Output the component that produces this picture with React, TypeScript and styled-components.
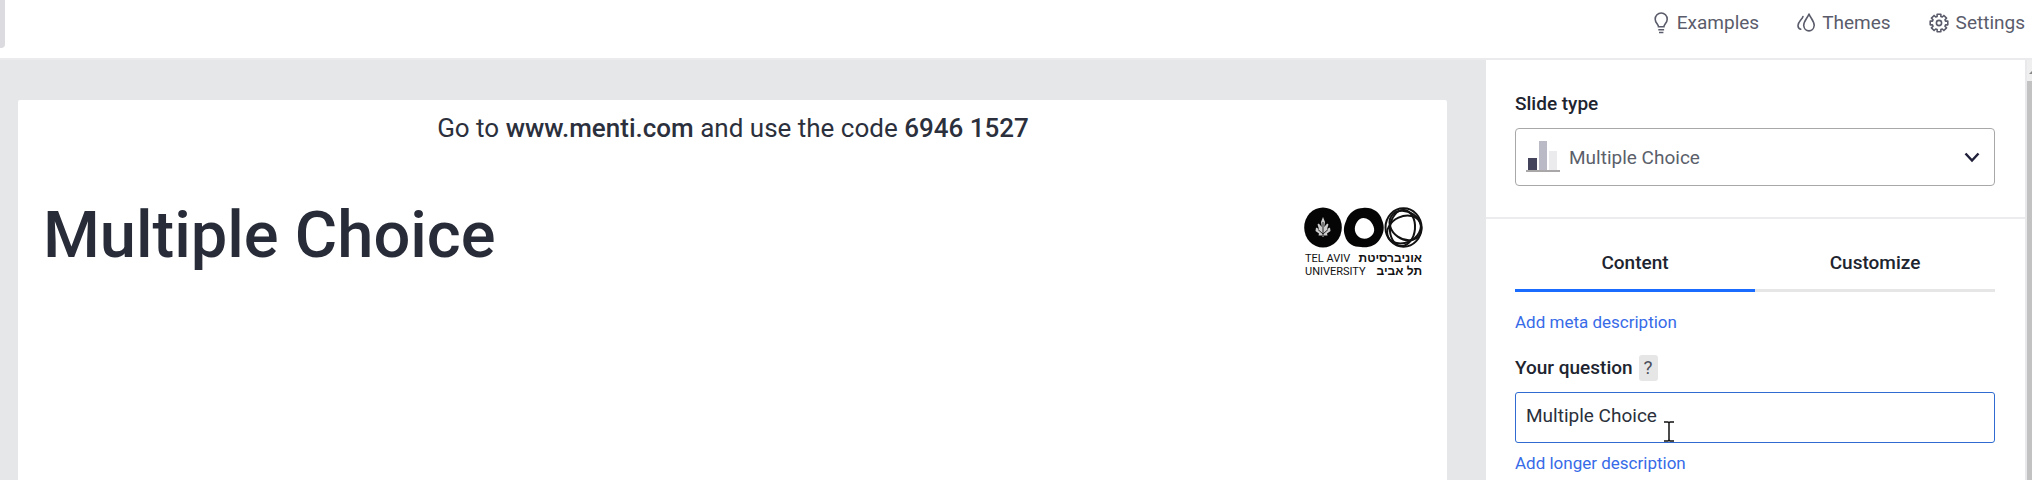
import React, { useState } from "react";
import styled, { createGlobalStyle } from "styled-components";

const GlobalStyle = createGlobalStyle`
  *, *::before, *::after { box-sizing: border-box; }
  body { margin: 0; background: #fff; }
  body, button, input, select { font-family: Roboto, "Liberation Sans", sans-serif; }
`;

const Page = styled.div`
  display: flex;
  flex-direction: column;
  height: 100vh;
  overflow: hidden;
  color: #20242f;
`;

const Header = styled.header`
  display: flex;
  flex: none;
  justify-content: space-between;
  height: 60px;
  border-bottom: 2px solid #ebebed;
  background: #fff;
`;

const HeaderHandle = styled.div`
  width: 5px;
  height: 48px;
  border-radius: 0 0 4px 0;
  background: #dcdbdf;
`;

const Nav = styled.nav`
  display: flex;
  align-items: flex-start;
  gap: 38px;
  padding: 11px 7px 0 0;
`;

const NavButton = styled.button`
  display: flex;
  align-items: center;
  gap: 7px;
  padding: 0;
  border: 0;
  background: none;
  color: #5a5c6b;
  font-size: 19px;
  line-height: 24px;
  cursor: pointer;
  svg { flex: none; }
`;

const Main = styled.main`
  display: flex;
  flex: 1;
  min-height: 0;
`;

const Stage = styled.section`
  display: flex;
  flex: 1;
  min-width: 0;
  padding: 40px 39px 0 18px;
  background: #e5e7e9;
`;

const Slide = styled.article`
  flex: 1;
  padding: 12px 24px 0 25px;
  border-radius: 2px 2px 0 0;
  background: #fff;
`;

const JoinLine = styled.p`
  margin: 0;
  color: #2b303c;
  font-size: 26px;
  line-height: 32px;
  text-align: center;
  strong { font-weight: 500; }
`;

const SlideHead = styled.div`
  display: flex;
  align-items: flex-start;
  justify-content: space-between;
  margin-top: 50px;
`;

const Title = styled.h1`
  margin: 0;
  color: #282c38;
  font-size: 65px;
  font-weight: 500;
  line-height: 82px;
`;

const Logo = styled.div`
  width: 119px;
  padding-top: 13px;
  color: #111;
  svg { display: block; }
`;

const LogoText = styled.div`
  padding: 4px 1px 0;
`;

const LogoLine = styled.div`
  display: flex;
  justify-content: space-between;
  font-size: 11px;
  line-height: 13px;
  white-space: nowrap;
  b { font-family: "Liberation Sans", "DejaVu Sans", sans-serif; font-size: 12px; }
`;

const Sidebar = styled.aside`
  display: flex;
  flex: none;
  width: 546px;
`;

const Panel = styled.div`
  flex: 1;
  overflow: hidden;
  background: #fff;
`;

const Group = styled.div<{ $divided?: boolean }>`
  padding: ${(p) => (p.$divided ? "32px 30px 31px 29px" : "31px 30px 0 29px")};
  border-bottom: ${(p) => (p.$divided ? "2px solid #ececee" : "0")};
`;

const Label = styled.label`
  display: block;
  font-size: 19px;
  font-weight: 500;
  line-height: 24px;
`;

const SelectBox = styled.div`
  display: grid;
  align-items: center;
  height: 58px;
  margin-top: 12px;
  > * { grid-area: 1 / 1; }
  > svg { z-index: 1; pointer-events: none; }
  > svg:first-child { margin-left: 11px; }
  > svg:last-child { justify-self: end; margin-right: 14px; }
`;

const Select = styled.select`
  width: 100%;
  height: 100%;
  padding: 0 48px 0 53px;
  border: 1px solid #a8a8a8;
  border-radius: 4px;
  appearance: none;
  background: #fff;
  color: #5b5f6b;
  font-size: 19px;
  cursor: pointer;
`;

const Tabs = styled.div`
  display: flex;
`;

const Tab = styled.button<{ $active: boolean }>`
  flex: 1;
  height: 42px;
  padding: 0 0 13px;
  border: 0;
  border-bottom: 3px solid ${(p) => (p.$active ? "#196cff" : "#e6e6e6")};
  background: none;
  color: #20242f;
  font-size: 19px;
  font-weight: 500;
  line-height: 24px;
  cursor: pointer;
`;

const TextLink = styled.a`
  display: block;
  width: max-content;
  color: #376be8;
  font-size: 17px;
  line-height: 24px;
  text-decoration: none;
`;

const Field = styled.div`
  display: flex;
  flex-direction: column;
  gap: 11px;
  padding: 21px 0 8px;
`;

const MetaRow = styled.div`
  padding-top: 18px;
`;

const LabelRow = styled.div`
  display: flex;
  align-items: center;
  gap: 6px;
  height: 26px;
`;

const HelpButton = styled.button`
  width: 19px;
  height: 26px;
  padding: 0;
  border: 0;
  border-radius: 3px;
  background: #e6e6e7;
  color: #4c505b;
  font-size: 19px;
  line-height: 24px;
`;

const InputWrap = styled.div`
  position: relative;
`;

const TextInput = styled.input`
  display: block;
  width: 100%;
  height: 51px;
  padding: 0 10px 4px;
  border: 1px solid #2f6bd0;
  border-radius: 3px;
  outline: 0;
  background: #fff;
  color: #2b303b;
  font-size: 19px;
`;

const Pointer = styled.svg`
  position: absolute;
  top: 29px;
  left: 149px;
  pointer-events: none;
`;

const ScrollTrack = styled.div`
  flex: none;
  width: 7px;
  border-left: 2px solid #e9e9eb;
  background: #efefef;
  svg { display: block; }
`;

const ScrollThumb = styled.div`
  height: 100%;
  background: #c2c2c2;
`;

const BulbIcon = () => (
  <svg width="16" height="22" viewBox="0 0 16 22" fill="none" stroke="currentColor" strokeWidth="1.6">
    <path d="M4.500 14.800c0-2.600-3.300-3.800-3.300-7.600a6 6.200 0 0 1 12 0c0 3.800-3.300 5-3.300 7.600zM4.300 17.700h5.800M5 20.500h4.400" />
  </svg>
);

const DropsIcon = () => (
  <svg width="18" height="22" viewBox="0 0 18 22" fill="none" stroke="currentColor" strokeWidth="1.6" strokeLinecap="round" strokeLinejoin="round">
    <path d="M12 2c1.500 4 5.200 7 5.200 11.500a5.300 6.200 0 0 1-10.500 0C6.700 9 10.500 6 12 2z" />
    <path d="M6 4.500C5 7.500 1 10 1 13.500c0 2 1 3.300 2.700 3.800" />
  </svg>
);

const GearIcon = () => {
  const teeth = Array.from({ length: 8 }, (_, i) => {
    const at = (deg: number, r: number) => {
      const a = ((i * 45 + deg) * Math.PI) / 180;
      return `${(10 + r * Math.sin(a)).toFixed(2)} ${(11 - r * Math.cos(a)).toFixed(2)}`;
    };
    return `${at(-12, 9)} L${at(12, 9)} L${at(16, 6.8)} L${at(29, 6.8)}`;
  });
  return (
    <svg width="20" height="22" viewBox="0 0 20 22" fill="none" stroke="currentColor" strokeWidth="1.6" strokeLinejoin="round">
      <path d={`M${teeth.join(" L")}Z`} />
      <circle cx="10" cy="11" r="2.600" />
    </svg>
  );
};

const BarsIcon = () => (
  <svg width="34" height="32" viewBox="0 0 34 32">
    <path fill="#43435b" d="M2 17h9v12H2z" />
    <path fill="#b9bac6" d="M13 0h8v29h-8z" />
    <path fill="#ebebed" d="M23 10h8v19h-8z" />
    <path fill="#aaa7a8" d="M0 29h34v2H0z" />
  </svg>
);

const ChevronIcon = () => (
  <svg width="18" height="14" viewBox="0 0 18 14" fill="none" stroke="#20203a" strokeWidth="2.500">
    <path d="M2.500 3.500l6.500 7 6.500-7" />
  </svg>
);

const LogoMark = () => (
  <svg width="119" height="41" viewBox="0 0 119 41">
    <ellipse cx="19" cy="20.500" rx="18.800" ry="20" fill="#050505" />
    <path fill="#ccc" d="M19 10l2 5-.8 5 3-3.500 1.300 1-1.500 4.500 3-1.500 .5 3.500-3.500 2.500 .5 2h-4v1.500h-1v-1.500h-4l.5-2-3.500-2.500 .5-3.500 3 1.500-1.500-4.500 1.300-1 3 3.500-.8-5z" />
    <path stroke="#222" d="M19 15v14M14 22.500l5 4.500 5-4.500" fill="none" />
    <path fill="#050505" fillRule="evenodd" d="M42 14C45 5 52 1 59 1c9-1 17 4 19 12 3 7 2 13-2 19-4 7-12 9-19 8-7 0-14-3-16-11-2-6-1-10 1-15zM53 15c-4 6-2 12 2 15 4 3 11 2 14-3 3-4 0-11-4-14-4-3-9-3-12 2z" />
    <g fill="none" stroke="#111" strokeWidth="2">
      <ellipse cx="99.500" cy="20.500" rx="18" ry="19.300" />
      <ellipse cx="101.500" cy="18.500" rx="17" ry="13.500" transform="rotate(35 101.500 18.500)" />
      <ellipse cx="98.500" cy="21" rx="18" ry="12.500" transform="rotate(95 98.500 21)" />
      <ellipse cx="100" cy="22.500" rx="17.500" ry="13" transform="rotate(155 100 22.500)" />
    </g>
  </svg>
);

export default function App() {
  const [tab, setTab] = useState("Content");
  const [question, setQuestion] = useState("Multiple Choice");

  return (
    <Page>
      <GlobalStyle />
      <Header>
        <HeaderHandle />
        <Nav>
          <NavButton><BulbIcon />Examples</NavButton>
          <NavButton><DropsIcon />Themes</NavButton>
          <NavButton><GearIcon />Settings</NavButton>
        </Nav>
      </Header>
      <Main>
        <Stage>
          <Slide>
            <JoinLine>
              Go to <strong>www.menti.com</strong> and use the code <strong>6946 1527</strong>
            </JoinLine>
            <SlideHead>
              <Title>Multiple Choice</Title>
              <Logo>
                <LogoMark />
                <LogoText>
                  <LogoLine><span>TEL AVIV</span><b lang="he">אוניברסיטת</b></LogoLine>
                  <LogoLine><span>UNIVERSITY</span><b lang="he">תל אביב</b></LogoLine>
                </LogoText>
              </Logo>
            </SlideHead>
          </Slide>
        </Stage>
        <Sidebar>
          <Panel>
            <Group $divided>
              <Label htmlFor="slide-type">Slide type</Label>
              <SelectBox>
                <BarsIcon />
                <Select id="slide-type" defaultValue="Multiple Choice">
                  <option>Multiple Choice</option>
                </Select>
                <ChevronIcon />
              </SelectBox>
            </Group>
            <Group>
              <Tabs role="tablist">
                {["Content", "Customize"].map((name) => (
                  <Tab key={name} role="tab" aria-selected={tab === name} $active={tab === name} onClick={() => setTab(name)}>
                    {name}
                  </Tab>
                ))}
              </Tabs>
              <MetaRow><TextLink href="#meta">Add meta description</TextLink></MetaRow>
              <Field>
                <LabelRow>
                  <Label htmlFor="question">Your question</Label>
                  <HelpButton aria-label="Help with your question">?</HelpButton>
                </LabelRow>
                <InputWrap>
                  <TextInput id="question" value={question} onChange={(e) => setQuestion(e.target.value)} />
                  <Pointer width="10" height="21" viewBox="0 0 10 21" fill="none" stroke="#111" strokeWidth="1.500">
                    <path d="M0 1h4l1 1 1-1h4M5 2v17M0 20h4l1-1 1 1h4" />
                  </Pointer>
                </InputWrap>
              </Field>
              <TextLink href="#longer">Add longer description</TextLink>
            </Group>
          </Panel>
          <ScrollTrack>
            <svg width="5" height="21" viewBox="0 0 5 21"><path d="M2 14l4-4v4z" fill="#888" /></svg>
            <ScrollThumb />
          </ScrollTrack>
        </Sidebar>
      </Main>
    </Page>
  );
}
